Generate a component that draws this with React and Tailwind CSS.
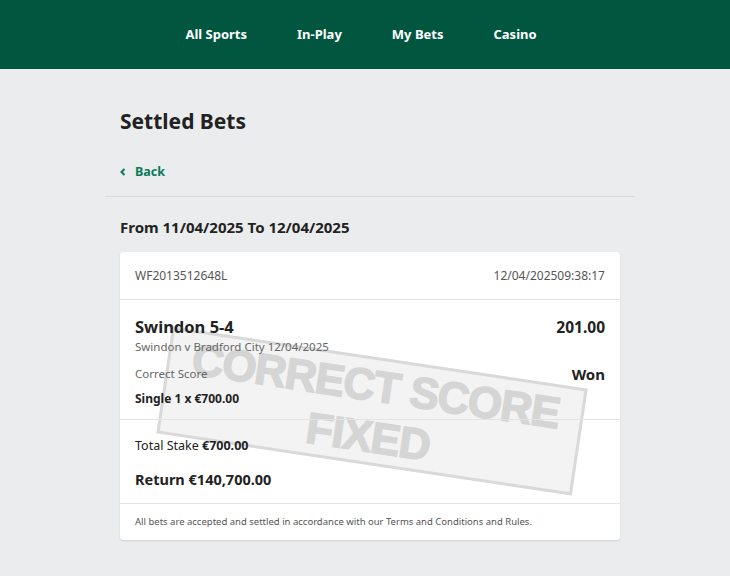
import React from 'react'

const navItems = ['All Sports', 'In-Play', 'My Bets', 'Casino']

const Stamp = () => (
  <div className="pointer-events-none absolute z-0 left-[42px] top-[105px] w-[420px] h-[108px] rotate-[8.5deg] border-[3px] border-[#d9d9d9] bg-[#f3f3f3] flex flex-col items-center justify-center leading-none">
    <div className="whitespace-nowrap text-[44px] font-bold tracking-[-1.2px] text-[#d5d5d5] [-webkit-text-stroke:1.5px_#d5d5d5] font-['Liberation_Sans',sans-serif]">CORRECT SCORE</div>
    <div className="whitespace-nowrap text-[44px] font-bold tracking-[-1px] text-[#d5d5d5] [-webkit-text-stroke:1.5px_#d5d5d5] font-['Liberation_Sans',sans-serif] mt-[7px]">FIXED</div>
  </div>
)

export default function App() {
  return (
    <div className="min-h-[576px] bg-[#ebeced] font-['Noto_Sans',sans-serif] text-[#222]">
      {/* Top nav */}
      <div className="h-[69px] bg-[#01563f] flex items-center justify-center pr-[8px] gap-[50px]">
        {navItems.map(item => (
          <span key={item} className="text-white font-bold text-[13px]">{item}</span>
        ))}
      </div>

      <div className="flex justify-center pl-[10px]">
        <div className="w-[530px]">
          <h1 className="px-[15px] pt-[37px] text-[21px] font-bold leading-[30px]">Settled Bets</h1>

          <div className="px-[15px] mt-[26px] flex items-center gap-[9px] text-[#0a7b5b] font-bold text-[12.5px] leading-[20px]">
            <svg width="6" height="10" viewBox="0 0 6 10" fill="none">
              <path d="M4.5 2 L1.5 5 L4.5 8" stroke="currentColor" strokeWidth="2" />
            </svg>
            <span>Back</span>
          </div>

          <div className="mt-[14px] border-t border-[#d8d9da]" />

          <div className="px-[15px] pt-[19px] text-[15px] font-bold leading-[22px]">From 11/04/2025 To 12/04/2025</div>

          <div className="mx-[15px] mt-[14px] bg-white rounded-[3px] shadow-[0_1px_2px_rgba(0,0,0,0.12)] relative overflow-hidden">
            <Stamp />

            <div className="relative z-[1] h-[48px] px-[15px] flex items-center justify-between text-[12px] text-[#555] border-b border-[#e2e3e4]">
              <span>WF2013512648L</span>
              <span>12/04/202509:38:17</span>
            </div>

            <div className="relative z-[1] px-[15px] pt-[16px] pb-[10px] border-b border-[#e2e3e4]">
              <div className="flex justify-between items-center">
                <span className="text-[16.5px] font-bold leading-[22px]">Swindon 5-4</span>
                <span className="text-[15.5px] font-bold leading-[22px]">201.00</span>
              </div>
              <div className="text-[11.5px] text-[#666] leading-[18px]">Swindon v Bradford City 12/04/2025</div>
              <div className="mt-[7px] flex justify-between items-center">
                <span className="text-[11.5px] text-[#666] leading-[22px]">Correct Score</span>
                <span className="text-[15px] font-bold leading-[22px]">Won</span>
              </div>
              <div className="mt-[4px] text-[12px] font-bold leading-[20px]">Single 1 x €700.00</div>
            </div>

            <div className="relative z-[1] px-[15px] pt-[15px] pb-[12px] border-b border-[#e2e3e4]">
              <div className="text-[12.5px] leading-[22px]">Total Stake <span className="font-bold">€700.00</span></div>
              <div className="mt-[10px] text-[14.5px] font-bold leading-[24px]">Return €140,700.00</div>
            </div>

            <div className="relative z-[1] h-[36px] px-[15px] flex items-center text-[9.5px] text-[#555]">
              All bets are accepted and settled in accordance with our Terms and Conditions and Rules.
            </div>
          </div>
        </div>
      </div>
    </div>
  )
}
